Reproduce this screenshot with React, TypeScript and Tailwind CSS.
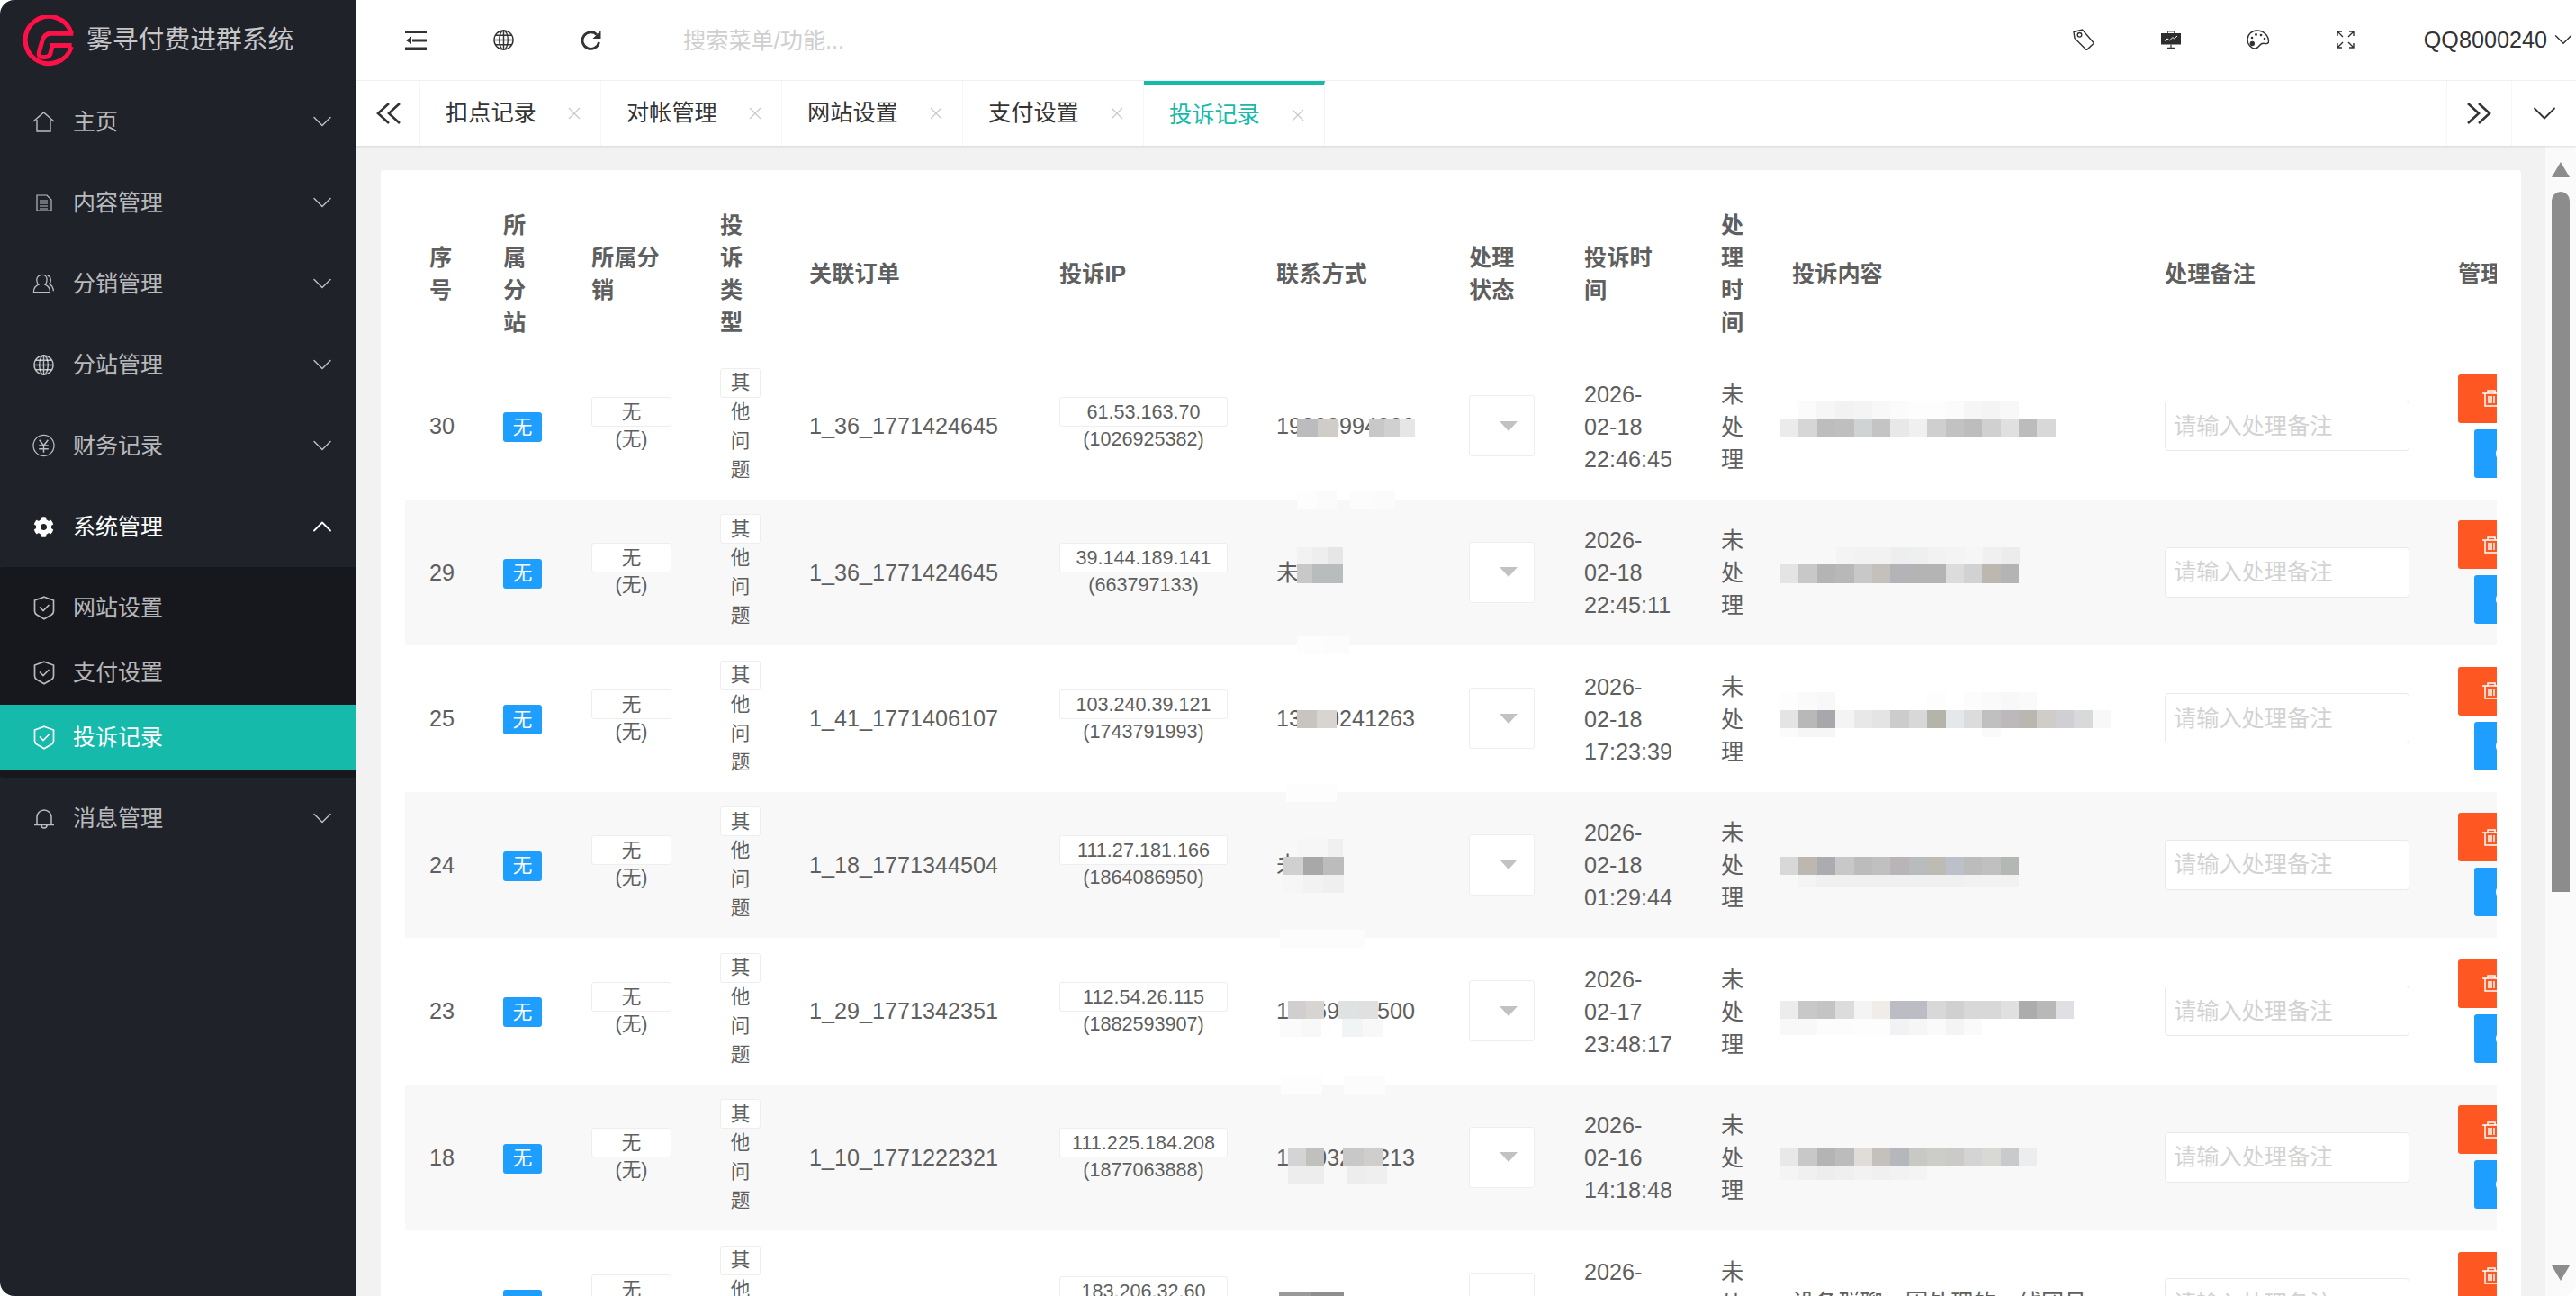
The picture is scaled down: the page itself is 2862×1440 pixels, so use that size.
import { ChevronDown, ChevronUp } from "lucide-react";
import { FaCog } from "react-icons/fa";

const COLS =
  "grid grid-cols-[82px_98px_143px_99px_278px_241px_214px_128px_152px_79px_414px_326px_246px] items-center";

interface Blur {
  x: number;
  dy: number;
  w: number;
  h: number;
  colors: string[];
}

interface Row {
  id: number | string;
  order: string;
  ip: string;
  qq: string;
  contact: string;
  date: string[];
  text?: string;
  blurs: Blur[];
}

const d = (s: string) => s.split(" ").map((c) => "#" + c);

const rows: Row[] = [
  {
    id: 30,
    order: "1_36_1771424645",
    ip: "61.53.163.70",
    qq: "(1026925382)",
    contact: "19000994000",
    date: ["2026-", "02-18", "22:46:45"],
    blurs: [
      { x: 1441, dy: -8, w: 23, h: 20, colors: d("bcbcbe d0ccc8") },
      { x: 1521, dy: -8, w: 17, h: 20, colors: d("c8c8c8 d0d0d0 e6e6e6") },
      { x: 1978, dy: -8, w: 20.4, h: 20, colors: d("ebebeb d6d6d6 bdbdbd bfbfbf d0d3d3 c4c4c4 e8e8e8 f0f0f0 cfcfcf c2c2c2 bdbdbd d0d0d0 e0e0e0 bcbcbc d8d8d8") },
      { x: 1998, dy: -28, w: 20.4, h: 20, colors: d("fbfbfb f6f6f6 f2f2f2 f4f4f4 f8f8f8 fbfbfb fdfdfd fdfdfd fbfbfb f6f6f6 f4f4f4 f8f8f8") },
    ],
  },
  {
    id: 29,
    order: "1_36_1771424645",
    ip: "39.144.189.141",
    qq: "(663797133)",
    contact: "未",
    date: ["2026-", "02-18", "22:45:11"],
    blurs: [
      { x: 1441, dy: -90, w: 22, h: 20, colors: d("fdfdfd fbfbfb") },
      { x: 1500, dy: -90, w: 25, h: 20, colors: d("fcfcfc fbfbfb") },
      { x: 1441, dy: -9, w: 17, h: 21, colors: d("c8c8c8 b8bcbc b8bcbc") },
      { x: 1441, dy: -28, w: 17, h: 19, colors: d("f2f2f2 eeeeee e6e6e6") },
      { x: 1978, dy: -9, w: 20.4, h: 21, colors: d("e4e4e4 c8c8c8 b4b4b4 b8b8b8 c8c8c8 c4c0bc b4b4b8 b4b4b4 b4b4b4 dcdcdc d0d2d4 bcb8b0 b4b4b4") },
      { x: 2040, dy: -28, w: 20.4, h: 19, colors: d("f4f4f4 f2f2f2 f2f2f2 eeeeee eef0f0 f2f2f2 f4f4f4 f6f6f6 f0f0f0 ececec") },
    ],
  },
  {
    id: 25,
    order: "1_41_1771406107",
    ip: "103.240.39.121",
    qq: "(1743791993)",
    contact: "13000241263",
    date: ["2026-", "02-18", "17:23:39"],
    blurs: [
      { x: 1441, dy: -91, w: 29, h: 20, colors: d("fdfdfd fcfcfc") },
      { x: 1441, dy: -9, w: 22, h: 20, colors: d("c8c4c0 d8d4d0") },
      { x: 1978, dy: -9, w: 20.4, h: 20, colors: d("e4e4e4 b8b8b8 a8a8ac f4f4f4 e8e8e8 e4e4e4 cccccc d8d8d8 b4b4a8 e4e8ea dcdcdc c0c0c0 bcb8bc b8b8b0 d0ccc8 d0d0d4 d8dada f8f8f8") },
      { x: 1978, dy: -29, w: 20.4, h: 20, colors: d("fdfdfd fafafa f8f8f8 ffffff ffffff ffffff ffffff ffffff fdfdfd ffffff fcfcfc fafafa f8f8f8 fafafa") },
      { x: 1978, dy: 11, w: 20.4, h: 10, colors: d("fbfbfb f6f6f6 f6f6f6 ffffff ffffff ffffff ffffff ffffff ffffff ffffff ffffff fafafa") },
    ],
  },
  {
    id: 24,
    order: "1_18_1771344504",
    ip: "111.27.181.166",
    qq: "(1864086950)",
    contact: "未",
    date: ["2026-", "02-18", "01:29:44"],
    blurs: [
      { x: 1429, dy: -90, w: 28, h: 20, colors: d("fdfdfd fdfdfd") },
      { x: 1425, dy: -9, w: 22.5, h: 20, colors: d("d0d0d0 a8a8a8 bcbcbc") },
      { x: 1441, dy: -29, w: 17, h: 20, colors: d("f6f6f6 f6f6f6 f0f0f0") },
      { x: 1425, dy: 11, w: 22.5, h: 20, colors: d("f6f6f6 f2f2f2 efefef") },
      { x: 1978, dy: -9, w: 20.4, h: 20, colors: d("d8d8d8 bcb8b0 acacb0 c8c8c8 bcbcbc c0c0c0 b8b4b8 b8bcbc bcbcb4 bcc0c8 bcbcbc c0c0c0 b4b8b4") },
      { x: 1998, dy: 11, w: 20.4, h: 14, colors: d("f4f4f4 f0f0f0 f0f0f0 f0f0f0 f0f0f0 f0f0f0 f0f0f0 f0f0f0 f0f0f0 f2f2f2 f2f2f2 f2f2f2") },
    ],
  },
  {
    id: 23,
    order: "1_29_1771342351",
    ip: "112.54.26.115",
    qq: "(1882593907)",
    contact: "10069000500",
    date: ["2026-", "02-17", "23:48:17"],
    blurs: [
      { x: 1422, dy: -90, w: 47, h: 20, colors: d("fcfcfc fcfcfc") },
      { x: 1431, dy: -11, w: 20, h: 20, colors: d("d0cece d8d4d2") },
      { x: 1486, dy: -11, w: 22.5, h: 20, colors: d("dfe2e2 e0e0e0") },
      { x: 1422, dy: 9, w: 23, h: 20, colors: d("fbfbfb f8f8f8 ffffff f0f4f4 f8f8f8") },
      { x: 1978, dy: -11, w: 20.4, h: 20, colors: d("ececec c8c8c8 c4c4c4 dcdcdc f4f4f4 f0ece8 bcbcc4 bcbcc4 d8d8d8 d0d0d0 d8d8d8 d8d8d8 e0e0e0 acacac b8b8b8 e0e0e4") },
      { x: 1978, dy: 9, w: 20.4, h: 18, colors: d("f8f8f8 f8f8f8 fcfcfc fcfcfc fdfdfd fdfdfd f2f2f4 f6f6f6 fafafa f4f4f4 fafafa") },
    ],
  },
  {
    id: 18,
    order: "1_10_1771222321",
    ip: "111.225.184.208",
    qq: "(1877063888)",
    contact: "10003200213",
    date: ["2026-", "02-16", "14:18:48"],
    blurs: [
      { x: 1423, dy: -90, w: 23, h: 20, colors: d("fdfdfd fdfdfd") },
      { x: 1493, dy: -90, w: 23, h: 20, colors: d("fcfcfc fcfcfc") },
      { x: 1431, dy: -11, w: 20, h: 20, colors: d("d4d4d4 c0c0bc") },
      { x: 1492, dy: -11, w: 22.5, h: 20, colors: d("c8c8c8 d0cecc") },
      { x: 1431, dy: 9, w: 20, h: 20, colors: d("ededed ededed") },
      { x: 1496, dy: 9, w: 22.5, h: 20, colors: d("ededed efefef") },
      { x: 1978, dy: -11, w: 20.4, h: 20, colors: d("e8e8e8 c8c8c8 b4b4b4 bcbcbc e0dcd8 c4c0bc b4b8bc c8c8c4 ccccc8 cccac8 d4d4d4 d8d8d4 c8cacc ecedef") },
      { x: 1978, dy: 9, w: 20.4, h: 16, colors: d("f4f4f4 f0f0f0 ededed efefef f2f2f2 f0f0f0 f2f2f2 f4f4f4") },
    ],
  },
  {
    id: "",
    order: "",
    ip: "183.206.32.60",
    qq: "",
    contact: "",
    date: ["2026-", "02-16", "12:00:00"],
    text: "设备群聊，因处理的，线团员",
    blurs: [
      { x: 1421, dy: -12, w: 36, h: 30, colors: d("9a9a9a 8f8f8f") },
    ],
  },
];

const menu = [
  { label: "主页", icon: <HomeIcon /> },
  { label: "内容管理", icon: <DocIcon /> },
  { label: "分销管理", icon: <UsersIcon /> },
  { label: "分站管理", icon: <GlobeIcon className="h-[23px] w-[23px]" /> },
  { label: "财务记录", icon: <YenIcon /> },
];

const tabs = ["扣点记录", "对帐管理", "网站设置", "支付设置", "投诉记录"];

function HomeIcon() {
  return (
    <svg viewBox="0 0 25 23" className="h-[23px] w-[25px]" fill="none" stroke="currentColor" strokeWidth="1.4">
      <path d="M1 11 12.500 1 24 11" />
      <path d="M5 9v13h15V9" />
    </svg>
  );
}

function DocIcon() {
  return (
    <svg viewBox="0 0 18 19" className="h-[19px] w-[18px]" fill="none" stroke="currentColor" strokeWidth="1.2">
      <path d="M1 1h11l5 5v12H1z" />
      <path d="M4 7h9M4 10h9M4 13h9M4 16h9" strokeWidth="1" />
    </svg>
  );
}

function UsersIcon() {
  return (
    <svg viewBox="0 0 27 24" className="h-[24px] w-[27px]" fill="none" stroke="currentColor" strokeWidth="1.4">
      <path d="M12 1.500c3.400 0 5.400 2.600 5.400 5.800 0 2.600-1 4.600-2.400 6 3.700 1.400 6 4.600 6 9H1.500c0-4.400 2.300-7.600 6-9-1.400-1.400-2.400-3.400-2.400-6C5.100 4.100 8.600 1.500 12 1.500z" />
      <path d="M18 2.500c2.600.8 4 3 4 5.500 0 1.800-.6 3.400-1.700 4.600 2.900 1.400 4.700 4.700 4.900 8.400" />
    </svg>
  );
}

function GlobeIcon({ className }: { className: string }) {
  return (
    <svg viewBox="0 0 24 24" className={className} fill="none" stroke="currentColor" strokeWidth="1.5">
      <circle cx="12" cy="12" r="11" />
      <ellipse cx="12" cy="12" rx="5" ry="11" />
      <path d="M12 1v22M1.500 12h21M3 6.500h18M3 17.500h18" />
    </svg>
  );
}

function YenIcon() {
  return (
    <svg viewBox="0 0 26 26" className="h-[26px] w-[26px]" fill="none" stroke="currentColor" strokeWidth="1.3">
      <circle cx="13" cy="13" r="12" />
      <path d="m8 6.500 5 6.500 5-6.500M7.500 13h11M7.500 17h11M13 13v8" strokeWidth="1.6" />
    </svg>
  );
}

function ShieldIcon() {
  return (
    <svg viewBox="0 0 24 27" className="h-[27px] w-[24px]" fill="none" stroke="currentColor" strokeWidth="1.7">
      <path d="M12 1.200 22.500 5v12c0 2-.8 3-2.300 4L12 25.700 3.800 21c-1.500-1-2.300-2-2.300-4V5z" />
      <path d="m7 12.500 4 4 6.500-6.500" />
    </svg>
  );
}

function BellIcon() {
  return (
    <svg viewBox="0 0 24 25" className="h-[25px] w-[24px]" fill="none" stroke="currentColor" strokeWidth="1.5">
      <path d="M4 19v-8a8 8 0 0 1 16 0v8" />
      <path d="M1 19.500h22" />
      <path d="M9 20c0 4 6 4 6 0" />
    </svg>
  );
}

function Logo() {
  return (
    <svg viewBox="0 0 170 170" className="h-[57px] w-[57px]" fill="none" stroke="#ff1046" strokeWidth="15">
      <path d="M159 60A78 78 0 1 0 159 104" />
      <path d="M165 60H92C74 60 66 70 62 86L52 122C49 133 54 139 64 139H72C82 139 88 134 90 124L96 100H160" />
    </svg>
  );
}

function ShrinkIcon() {
  return (
    <svg viewBox="0 0 24 22" className="h-[22px] w-[24px]" fill="#333">
      <path d="M0 0h24v3H0zM0 18.500h24V22H0zM8 9.500h16v3H8z" />
      <path d="M7 6.500v8.500L1 11z" />
    </svg>
  );
}

function RefreshIcon() {
  return (
    <svg viewBox="0 0 24 22" className="h-[22px] w-[24px]" fill="none" stroke="#333" strokeWidth="2.8">
      <path d="M18 4.500A9.300 9.300 0 1 0 20.500 13" />
      <path d="M22.500 0v9h-9z" fill="#333" stroke="none" />
    </svg>
  );
}

function TagIcon() {
  return (
    <svg viewBox="0 0 24 24" className="h-[24px] w-[24px]" fill="none" stroke="#333" strokeWidth="1.4">
      <path d="M1 3.500 10.500 1l12.300 14.300c.4.500.4 1-.1 1.500l-6.800 6.300c-.5.400-1 .4-1.400 0L2 10.500z" />
      <circle cx="7.500" cy="6.800" r="2.300" />
    </svg>
  );
}

function BoardIcon() {
  return (
    <svg viewBox="0 0 22 20" className="h-[20px] w-[22px]" fill="none">
      <path d="M7.500 3V1h7v2" stroke="#555" strokeWidth="1" />
      <path d="M0 3h22v12.500H0z" fill="#2d2d2d" />
      <path d="m4 11.500 3-2.500 2.500 2 3.500-3.500 1.500 1.500 3.500-3" stroke="#fff" strokeWidth="1" />
      <path d="M11 15.500V19M7 19.300h8" stroke="#333" strokeWidth="1.2" />
    </svg>
  );
}

function PaletteIcon() {
  return (
    <svg viewBox="0 0 26 22" className="h-[22px] w-[26px]" fill="none" stroke="#333" strokeWidth="1.4">
      <path d="M11.500 1C5.500 1 1 5.500 1 11s4 10 8.500 10c2.500 0 3.500-1.500 5-3.500 1.500-2 3.500-2.500 6-2 2.500.5 4.200-.3 4-3C24 6 18.500 1 11.500 1z" />
      <g fill="#333" stroke="none">
        <circle cx="6.300" cy="15.500" r="2.700" />
        <circle cx="6" cy="9" r="1.300" />
        <circle cx="10.500" cy="5.500" r="1.400" />
        <circle cx="16" cy="6" r="1.300" />
        <circle cx="20" cy="10" r="1.300" />
      </g>
    </svg>
  );
}

function FullIcon() {
  return (
    <svg viewBox="0 0 20 20" className="h-[20px] w-[20px]" fill="none" stroke="#333" strokeWidth="1.4">
      <path d="M1 6V1h5M1 1l6 6M19 6V1h-5M19 1l-6 6M1 14v5h5M1 19l6-6M19 14v5h-5M19 19l-6-6" />
    </svg>
  );
}

function DoubleLeft() {
  return (
    <svg viewBox="0 0 27 24" className="h-[24px] w-[27px]" fill="none" stroke="#333" strokeWidth="2.6">
      <path d="M14 1 2 12l12 11M26 1 14 12l12 11" />
    </svg>
  );
}

function DoubleRight() {
  return (
    <svg viewBox="0 0 27 24" className="h-[24px] w-[27px]" fill="none" stroke="#333" strokeWidth="2.6">
      <path d="M1 1l12 11L1 23M13 1l12 11-12 11" />
    </svg>
  );
}

function CloseIcon() {
  return (
    <svg viewBox="0 0 14 14" className="h-[14px] w-[14px]" fill="none" stroke="#c8c8c8" strokeWidth="1.2">
      <path d="m1 1 12 12M13 1 1 13" />
    </svg>
  );
}

function TrashIcon() {
  return (
    <svg viewBox="0 0 20 19" className="h-[19px] w-[20px] shrink-0" fill="none" stroke="#fff" strokeWidth="1.5">
      <path d="M0 4h20M6 4V1h8v3M3 4v14h14V4M7 7v8M10 7v8M13 7v8" />
    </svg>
  );
}

function Sidebar() {
  return (
    <aside className="flex w-[396px] shrink-0 flex-col bg-[#20222a] text-[25px] text-white/70">
      <div className="flex h-[90px] items-center pl-[26px]">
        <Logo />
        <span className="ml-[13px] text-[28.8px] text-white/75">雾寻付费进群系统</span>
      </div>
      {menu.map((m) => (
        <div key={m.label} className="flex h-[90px] items-center pl-[36px] pr-[20px]">
          <span className="flex w-[25px] justify-center">{m.icon}</span>
          <span className="ml-[20px] flex-1 pt-[2px]">{m.label}</span>
          <ChevronDown className="h-[36px] w-[36px]" strokeWidth={1} />
        </div>
      ))}
      <div className="flex h-[90px] items-center pl-[36px] pr-[20px] text-white">
        <span className="flex w-[25px] justify-center">
          <FaCog className="h-[23px] w-[23px]" />
        </span>
        <span className="ml-[20px] flex-1 pt-[2px]">系统管理</span>
        <ChevronUp className="h-[36px] w-[36px]" strokeWidth={1.2} />
      </div>
      <div className="rounded-[3px] bg-[#17181d] py-[9px]">
        <div className="flex h-[72px] items-center pl-[36px]">
          <span className="flex w-[25px] justify-center"><ShieldIcon /></span>
          <span className="ml-[20px] pt-[2px]">网站设置</span>
        </div>
        <div className="flex h-[72px] items-center pl-[36px]">
          <span className="flex w-[25px] justify-center"><ShieldIcon /></span>
          <span className="ml-[20px] pt-[2px]">支付设置</span>
        </div>
        <div className="flex h-[72px] items-center bg-[#16baaa] pl-[36px] text-white">
          <span className="flex w-[25px] justify-center"><ShieldIcon /></span>
          <span className="ml-[20px] pt-[2px]">投诉记录</span>
        </div>
      </div>
      <div className="flex h-[90px] items-center pl-[36px] pr-[20px]">
        <span className="flex w-[25px] justify-center"><BellIcon /></span>
        <span className="ml-[20px] flex-1 pt-[2px]">消息管理</span>
        <ChevronDown className="h-[36px] w-[36px]" strokeWidth={1} />
      </div>
    </aside>
  );
}

function TopBar() {
  return (
    <header className="flex h-[90px] shrink-0 items-center border-b border-[#f4f4f4] bg-white text-[#333]">
      <div className="ml-[54px] flex w-[98px] shrink-0"><ShrinkIcon /></div>
      <div className="flex w-[97px] shrink-0"><GlobeIcon className="h-[23px] w-[23px]" /></div>
      <div className="flex w-[114px] shrink-0"><RefreshIcon /></div>
      <input
        placeholder="搜索菜单/功能..."
        className="w-[400px] bg-transparent pt-[3px] text-[25.2px] outline-none placeholder:text-[#cfcfcf]"
      />
      <div className="ml-auto flex items-center">
        <div className="w-[98px]"><TagIcon /></div>
        <div className="w-[95px]"><BoardIcon /></div>
        <div className="w-[100px]"><PaletteIcon /></div>
        <div className="w-[97px]"><FullIcon /></div>
        <span className="text-[25.2px]">QQ8000240</span>
        <ChevronDown className="mr-[-3px] ml-[1px] h-[34px] w-[34px]" strokeWidth={1} />
      </div>
    </header>
  );
}

function TabBar() {
  return (
    <div className="relative z-20 flex h-[72px] shrink-0 bg-white text-[25.2px] text-[#333] shadow-[0_1px_3px_rgba(0,0,0,0.12)]">
      <div className="flex w-[71px] items-center justify-center border-r border-[#f6f6f6]">
        <DoubleLeft />
      </div>
      {tabs.map((t, i) => (
        <div
          key={t}
          className={
            i === 4
              ? "flex w-[201px] items-center border-r border-t-[4px] border-[#f6f6f6] border-t-[#16baaa] pl-[28px] pr-[22px] text-[#16baaa]"
              : "flex w-[201px] items-center border-r border-[#f6f6f6] pl-[28px] pr-[22px]"
          }
        >
          <span className="flex-1">{t}</span>
          <CloseIcon />
        </div>
      ))}
      <div className="ml-auto flex w-[72px] items-center justify-center border-l border-[#f6f6f6]">
        <DoubleRight />
      </div>
      <div className="flex w-[72px] items-center justify-center border-l border-[#f6f6f6]">
        <ChevronDown className="h-[44px] w-[44px]" strokeWidth={1} />
      </div>
    </div>
  );
}

function BlurBlock({ b }: { b: Blur }) {
  return (
    <div className="absolute z-10 flex" style={{ left: b.x - 450, top: 81 + b.dy }}>
      {b.colors.map((c, i) => (
        <div key={i} style={{ width: b.w, height: b.h, backgroundColor: c }} />
      ))}
    </div>
  );
}

function TableRow({ r, stripe }: { r: Row; stripe: boolean }) {
  return (
    <div className={`${COLS} relative h-[162.5px] ${stripe ? "bg-[#f8f8f8]" : "bg-white"}`}>
      <div className="px-[27px] pt-[2px]">{r.id}</div>
      <div className="px-[27px] pt-[3px]">
        <div className="flex h-[33px] w-[43px] items-center justify-center rounded-[3px] bg-[#1e9fff] text-[21.6px] text-white">
          无
        </div>
      </div>
      <div className="px-[27px] pb-[4px] text-center text-[21.6px] leading-[28px]">
        <div className="flex h-[33px] items-center justify-center rounded-[3px] border border-[#eeeeee] bg-white pt-[1px]">无</div>
        <div>(无)</div>
      </div>
      <div className="px-[27px] text-center text-[21.6px] leading-[32px]">
        <div className="flex h-[33px] items-center justify-center rounded-[3px] border border-[#eeeeee] bg-white">其</div>
        <div>他</div>
        <div>问</div>
        <div>题</div>
      </div>
      <div className="px-[27px] pt-[2px]">{r.order}</div>
      <div className="min-h-[61px] px-[27px] pb-[4px] text-center text-[21.6px] leading-[28px]">
        <div className="flex h-[33px] items-center justify-center rounded-[3px] border border-[#eeeeee] bg-white pt-[1px]">{r.ip}</div>
        <div>{r.qq}</div>
      </div>
      <div className="whitespace-nowrap px-[27px] pt-[2px]">{r.contact}</div>
      <div className="px-[27px]">
        <div className="flex h-[68px] w-[73px] items-center justify-end rounded-[3px] border border-[#eeeeee] bg-white pr-[18px]">
          <div className="h-0 w-0 border-x-[10px] border-t-[11px] border-x-transparent border-t-[#c2c2c2]" />
        </div>
      </div>
      <div className="whitespace-nowrap px-[27px] pt-[1px] leading-[36px]">
        {r.date.map((p) => (
          <div key={p}>{p}</div>
        ))}
      </div>
      <div className="px-[27px] pt-[1px] leading-[36px]">未处理</div>
      <div className="whitespace-nowrap px-[27px]">{r.text}</div>
      <div className="px-[27px]">
        <input
          placeholder="请输入处理备注"
          className="h-[56px] w-full rounded-[4px] border border-[#e9e9e9] bg-white pl-[9px] text-[25.2px] outline-none placeholder:text-[#d2d2d2]"
        />
      </div>
      <div className="px-[27px] text-[21.6px] text-white">
        <div className="flex h-[54px] items-center gap-[6px] rounded-[3px] bg-[#ff5722] pl-[27px]">
          <TrashIcon />
          删除
        </div>
        <div className="ml-[18px] mt-[7px] flex h-[54px] items-center gap-[6px] rounded-[3px] bg-[#1e9fff] pl-[24px]">
          <div className="h-[18px] w-[18px] shrink-0 rounded-full border-2 border-white" />
          编辑
        </div>
      </div>
      {r.blurs.map((b, i) => (
        <BlurBlock key={i} b={b} />
      ))}
    </div>
  );
}

function Scrollbar() {
  return (
    <div className="flex h-full w-[34px] shrink-0 flex-col items-center bg-[#fafafa] pt-[18px]">
      <div className="h-0 w-0 border-x-[10px] border-b-[17px] border-x-transparent border-b-[#8c8c8c]" />
      <div className="mt-[16px] h-[778px] w-[20px] rounded-t-full bg-[#8c8c8c]" />
      <div className="mb-[17px] mt-auto h-0 w-0 border-x-[10px] border-t-[17px] border-x-transparent border-t-[#8c8c8c]" />
    </div>
  );
}

export default function App() {
  return (
    <div className="flex h-[1440px] w-[2862px] overflow-hidden rounded-[16px] bg-white text-[25.2px] text-[#5f5f5f] [font-family:'Liberation_Sans','Noto_Sans_CJK_SC',sans-serif]">
      <Sidebar />
      <main className="flex min-w-0 flex-1 flex-col">
        <TopBar />
        <TabBar />
        <div className="flex min-h-0 flex-1 bg-[#f2f2f2]">
          <div className="min-w-0 flex-1 overflow-hidden px-[27px] pt-[27px]">
            <div className="h-[1400px] rounded-[3px] bg-white px-[27px] pt-[27px]">
              <div className="h-full overflow-hidden">
                <div className="w-[2500px]">
                  <div className={`${COLS} h-[176px] font-bold leading-[36px]`}>
                    {["序号", "所属分站", "所属分销", "投诉类型", "关联订单", "投诉IP", "联系方式", "处理状态", "投诉时间", "处理时间", "投诉内容", "处理备注", "管理"].map((h) => (
                      <div key={h} className="px-[27px]">{h}</div>
                    ))}
                  </div>
                  {rows.map((r, i) => (
                    <TableRow key={i} r={r} stripe={i % 2 === 1} />
                  ))}
                </div>
              </div>
            </div>
          </div>
          <Scrollbar />
        </div>
      </main>
    </div>
  );
}
